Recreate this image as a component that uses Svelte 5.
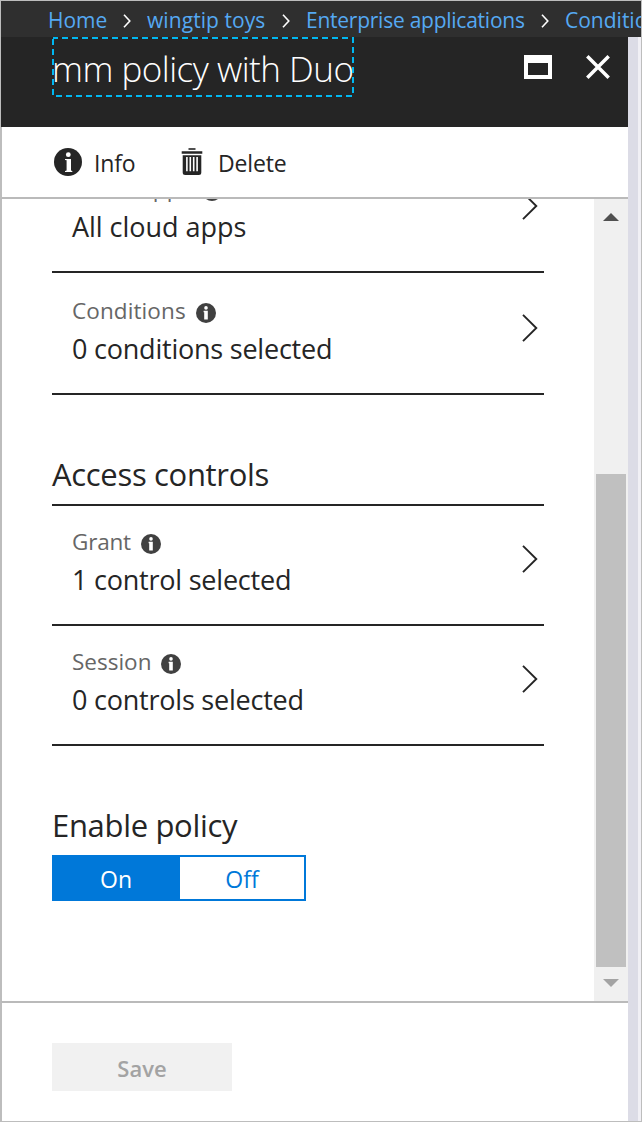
<script>
  const crumbs = [
    { text: 'Home', w: 59, ls: 0 },
    { text: 'wingtip toys', w: 119, ls: 0.07 },
    { text: 'Enterprise applications', w: 219, ls: -0.25 },
    { text: 'Conditional Access', w: 180, ls: 0 }
  ];
  let enabled = $state(true);
</script>

{#snippet info(size)}
  <svg class="info" width={size} height={size} viewBox="0 0 20 20">
    <circle cx="10" cy="10" r="10" fill="currentColor" />
    <circle cx="10" cy="4.9" r="1.8" fill="#fff" />
    <path d="M7.6 7.8h4.2v8.800H8.200V9.200h-.6z" fill="#fff" />
  </svg>
{/snippet}

{#snippet row(cls, label, value)}
  <div class="row {cls}">
    <div class="texts">
      <div class="label"><span>{label}</span>{@render info(20)}</div>
      <div class="value"><span>{value}</span></div>
    </div>
    <svg class="chev" width="18" height="30" viewBox="0 0 18 30">
      <path d="M2 1.8 15.3 15 2 28.2" fill="none" stroke="#252525" stroke-width="1.9" />
    </svg>
  </div>
{/snippet}

<div class="frame">
  <nav class="crumbs">
    {#each crumbs as c, i}
      {#if i > 0}
        <svg class="sep" width="8" height="14" viewBox="0 0 8 14">
          <path d="M1 .8 6.8 7 1 13.2" fill="none" stroke="#fff" stroke-width="1.6" />
        </svg>
      {/if}
      <a href="#top" style="width:{c.w}px;letter-spacing:{c.ls}px">{c.text}</a>
    {/each}
  </nav>
  <div class="body">
    <main class="blade">
      <header>
        <h1>
          <svg class="dash" width="302" height="60" viewBox="0 0 302 60">
            <rect x="1" y="1" width="300" height="58" fill="none" stroke="#00b7f0" stroke-width="2" stroke-dasharray="6 4" stroke-dashoffset="1" />
          </svg>
          <span>mm policy with Duo</span>
        </h1>
        <svg class="max" width="28" height="24" viewBox="0 0 28 24">
          <path d="M0 0h28v24H0zM4 8v12h20V8z" fill="#fff" fill-rule="evenodd" />
        </svg>
        <svg class="close" width="24" height="24" viewBox="0 0 24 24">
          <path d="M1.3 1.3 22.7 22.7M22.7 1.3 1.3 22.7" stroke="#fff" stroke-width="3.5" />
        </svg>
      </header>
      <div class="tools">
        <svg width="28" height="28" viewBox="0 0 28 28">
          <circle cx="14" cy="14" r="14" fill="#252525" />
          <circle cx="14.3" cy="6.7" r="2.4" fill="#fff" />
          <path d="M11 11h6v11.6l1.3.3v1H11v-1l1.6-.3V12.3L11 12z" fill="#fff" />
        </svg>
        <span class="t-info">Info</span>
        <svg class="trash" width="22" height="28" viewBox="0 0 22 28">
          <path d="M7.5 1h7" stroke="#252525" stroke-width="1.6" fill="none" />
          <path d="M.7 3.2h20.6v2.6H.7zM1.7 7.2h18.6V24.500q0 2.500-2.500 2.500H4.200q-2.500 0-2.500-2.500z" fill="#252525" />
          <path d="M5.900 9v14.300M9.300 9v14.300M12.700 9v14.300M16.100 9v14.300" stroke="#fff" stroke-width="1.600" />
        </svg>
        <span class="t-delete">Delete</span>
      </div>
      <div class="scroll">
        <div class="content">
          {@render row('tall first', 'Cloud apps', 'All cloud apps')}
          {@render row('tall cond', 'Conditions', '0 conditions selected')}
          <h2 class="access"><span>Access controls</span></h2>
          {@render row('grant', 'Grant', '1 control selected')}
          {@render row('session', 'Session', '0 controls selected')}
          <h2 class="enable"><span>Enable policy</span></h2>
          <div class="toggle">
            <button class:on={enabled} onclick={() => (enabled = true)}>On</button>
            <button class:on={!enabled} onclick={() => (enabled = false)}>Off</button>
          </div>
        </div>
        <div class="bar">
          <svg width="16" height="8" viewBox="0 0 16 8"><path d="M8 0 16 8H0z" fill="#505050" /></svg>
          <div class="thumb"></div>
          <svg width="16" height="8" viewBox="0 0 16 8"><path d="M8 8 16 0H0z" fill="#a3a3a3" /></svg>
        </div>
      </div>
      <footer><button class="save" disabled>Save</button></footer>
    </main>
    <div class="edge"></div>
  </div>
</div>

<style>
  :global(body) { margin: 0; overflow: hidden; }
  .frame {
    box-sizing: border-box; width: 642px; height: 1122px; overflow: hidden;
    border: 1px solid #bdbdbd; display: flex; flex-direction: column;
    font-family: "Open Sans", "Noto Sans", sans-serif; color: #252525; background: #fff;
  }
  .crumbs {
    height: 36px; flex: none; background: #2f2f2f; display: flex; align-items: center;
    padding-left: 47px; overflow: hidden; white-space: nowrap;
  }
  .crumbs a {
    flex: none; color: #55a9f3; text-decoration: none; font-size: 21px; line-height: 36px;
    padding-top: 2px;
  }
  .sep { flex: none; margin: 3px 16px 0; }
  .body { flex: 1; display: flex; min-height: 0; }
  .blade { width: 627px; display: flex; flex-direction: column; }
  .edge { width: 10px; background: #dcdce6; border-right: 3px solid #f1f0f5; }
  header {
    height: 90px; flex: none; background: #252525; display: flex; align-items: flex-start;
    padding-left: 51px; box-sizing: border-box;
  }
  h1 {
    position: relative; margin: 0; width: 302px; height: 60px; font-weight: 300;
    font-size: 35px; line-height: 64px; letter-spacing: -0.5px; color: #fff; white-space: nowrap;
  }
  .dash { position: absolute; left: 0; top: 0; }
  .max { margin: 18px 0 0 170px; }
  .close { margin: 18px 0 0 34px; }
  .tools {
    height: 70px; flex: none; display: flex; align-items: center; padding-left: 52px;
    border-bottom: 2px solid #bababa; border-left: 1px solid #bdbdbd;
    font-size: 23px; line-height: 34px; letter-spacing: -0.15px;
  }
  .tools span { padding-top: 2px; }
  .t-info { margin-left: 12px; width: 41px; }
  .trash { margin-left: 46px; }
  .t-delete { margin-left: 15px; }
  .scroll { height: 802px; flex: none; display: flex; overflow: hidden; border-left: 1px solid #bdbdbd; }
  .content { width: 492px; flex: none; padding-left: 50px; margin-right: 50px; }
  .row {
    height: 118px; border-bottom: 2px solid #252525; display: flex;
    justify-content: space-between; padding: 0 5px 0 20px;
  }
  .texts { padding-top: 21px; }
  .tall { height: 120px; }
  .tall .texts { padding-top: 23px; }
  .first { margin-top: -48px; }
  .label { display: flex; align-items: center; height: 30px; font-size: 22.5px; line-height: 30px; color: #666; }
  .cond .label { letter-spacing: 0.1px; }
  .first .label { letter-spacing: 0.2px; }
  .grant .label { letter-spacing: -0.2px; }
  .info { color: #404040; margin: 4px 0 0 10px; }
  .value { font-size: 27px; line-height: 46px; letter-spacing: -0.22px; white-space: nowrap; }
  .first .value { letter-spacing: -0.03px; }
  .chev { margin-top: 38px; }
  .tall .chev { margin-top: 40px; }
  h2 { margin: 0; font-weight: 400; font-size: 31px; line-height: 44px; letter-spacing: -0.32px; }
  .access { padding-top: 57px; height: 52px; border-bottom: 2px solid #252525; }
  .enable { padding-top: 57px; height: 52px; }
  .toggle { display: flex; width: 250px; height: 42px; border: 2px solid #0078d9; }
  .toggle button {
    flex: 1; border: 0; padding: 2px 0 0; background: #fff; color: #0078d9; font: inherit; font-size: 23px;
    line-height: 34px;
  }
  .toggle button.on { flex: 0 0 126px; padding-right: 2px; background: #0078d9; color: #fff; }
  .bar {
    width: 34px; flex: none; background: #f0f0f0; display: flex; flex-direction: column;
    align-items: center; box-sizing: border-box; padding: 14px 0;
  }
  .thumb { width: 30px; height: 493px; margin: 253px 0 12px; background: #c0c0c0; }
  footer { flex: 1; border-top: 2px solid #bababa; border-left: 1px solid #bdbdbd; padding: 40px 0 0 50px; }
  .save {
    display: block; width: 180px; height: 48px; border: 0; padding: 1px 0 0; background: #f1f1f1;
    color: #a3a3a3; font: inherit; font-weight: 600; font-size: 22px;
  }
</style>
